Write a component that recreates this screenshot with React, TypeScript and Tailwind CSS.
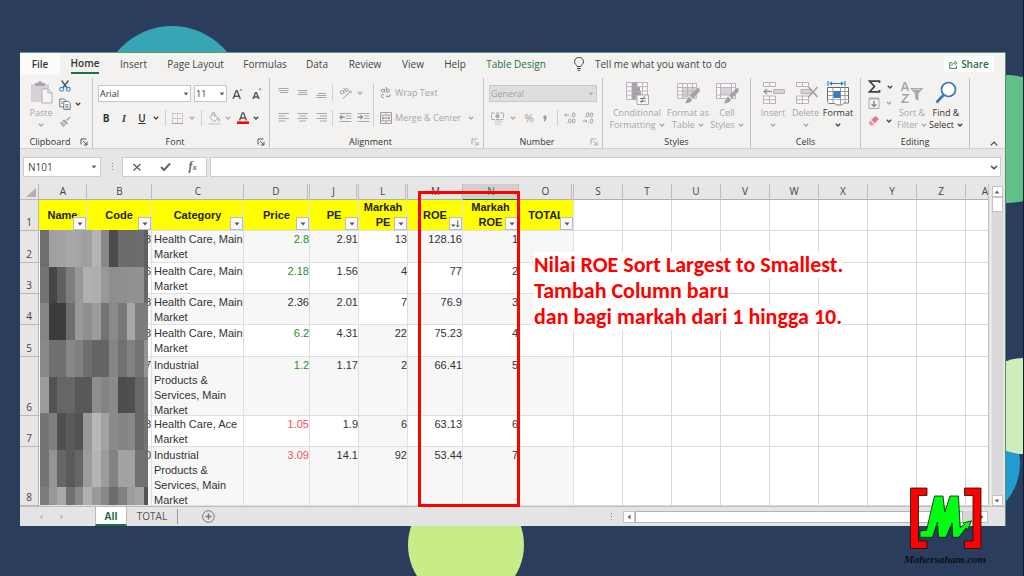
import type { ReactNode } from "react";

const UI_FONT = "font-['Open_Sans','Noto_Sans',sans-serif]";

/* ---------- small shared pieces ---------- */

function Chevron({ dark = false }: { dark?: boolean }) {
  return (
    <svg viewBox="0 0 6 4" className={dark ? "h-1 w-1.5 shrink-0 text-[#444]" : "h-1 w-1.5 shrink-0 text-[#aaa]"} fill="none" stroke="currentColor" strokeWidth="1.3">
      <path d="M0.8 0.8 3 3 5.2 0.8" />
    </svg>
  );
}

function Caret({ className }: { className: string }) {
  return (
    <svg viewBox="0 0 6 4" className={className} fill="currentColor">
      <path d="M0.5 0.5h5L3 3.5z" />
    </svg>
  );
}

function Launcher({ dark }: { dark: boolean }) {
  return (
    <svg viewBox="0 0 8 8" className={dark ? "size-2 text-[#555]" : "size-2 text-[#aaa]"} fill="none" stroke="currentColor" strokeWidth="1">
      <path d="M1 6.5V1h5.5M3 3l4 4M7 3.8V7H3.8" />
    </svg>
  );
}

function Divider({ tall = false }: { tall?: boolean }) {
  return <span className={tall ? "h-11 w-px bg-[#d0d0d0]" : "h-4 w-px bg-[#d0d0d0]"} />;
}

type GroupProps = { label: string; width: string; launcher?: "dark" | "light"; children: ReactNode };

function Group({ label, width, launcher, children }: GroupProps) {
  return (
    <section aria-label={label} className={`${width} flex shrink-0 flex-col`}>
      <div className="flex h-[70px] flex-col border-r border-[#c4c4c4]">
        <div className="flex h-[58px] items-start">{children}</div>
        <div className="flex h-3 items-center text-center text-[9px] font-medium leading-3 text-[#333]">
          <span className="flex-1">{label}</span>
          {launcher && (
            <button aria-label={`${label} settings`} className="flex w-3 shrink-0">
              <Launcher dark={launcher === "dark"} />
            </button>
          )}
        </div>
      </div>
    </section>
  );
}

/* ---------- ribbon drawings ---------- */

const PasteIcon = () => (
  <svg viewBox="0 0 24 24" className="size-6">
    <path d="M2 4h18v18H2z" fill="#d5d1d6" />
    <path d="M6 6V3h3a2 2 0 0 1 4 0h3v3z" fill="#aaa6aa" />
    <path d="M13 9h6l4 4v10H13z" fill="#f6f3f7" stroke="#b5b0b6" />
    <path d="M19 9v4h4" fill="none" stroke="#b5b0b6" />
  </svg>
);

const CutIcon = () => (
  <svg viewBox="0 0 12 12" className="size-3" fill="none">
    <path d="M2.6 0.5 8.2 8M9.4 0.5 3.8 8" stroke="#555" strokeWidth="1.4" />
    <circle cx="2.7" cy="9.3" r="1.9" stroke="#3f86c4" strokeWidth="1.1" />
    <circle cx="9.3" cy="9.3" r="1.9" stroke="#3f86c4" strokeWidth="1.1" />
  </svg>
);

const CopyIcon = () => (
  <svg viewBox="0 0 12 12" className="size-3" fill="#fff" stroke="#666" strokeWidth="0.9">
    <path d="M0.8 1h4.4l1.8 1.8v6H0.8z" />
    <path d="M4.8 3.4h4.4l2 2v6H4.8z" />
    <path d="M6.3 6.6h3M6.3 8.2h3.4M6.3 9.8h3.4M2.2 3.6h1.6M2.2 5.4h1.6" stroke="#3f86c4" />
  </svg>
);

const PainterIcon = () => (
  <svg viewBox="0 0 12 12" className="size-3">
    <path d="m7 4 3.6-3.5 1 1L8 5z" fill="#aaa" />
    <path d="m5 3.2 4 4-1.4 1.2-4-4z" fill="#999" />
    <path d="M3.2 5 7 8.8 4.2 11.4 0.6 7z" fill="#bfbbc0" />
  </svg>
);

const BordersIcon = () => (
  <svg viewBox="0 0 11 11" className="size-[11px]" fill="none" stroke="#b9aebb">
    <path d="M0.5 0.5h10v10h-10zM5.5 0.5v10M0.5 5.5h10" strokeDasharray="1.5 0.8" />
    <path d="M0.5 10.5h10" stroke="#a9a0ab" />
  </svg>
);

const BucketIcon = () => (
  <svg viewBox="0 0 13 13" className="size-[13px]">
    <path d="m5.500 1.500 4.700 4.700-4.200 3.600L1.800 5.600z" fill="#f6f3f7" stroke="#aaa" />
    <path d="M4 4V1.500a1.400 1.400 0 0 1 2.800 0V5" fill="none" stroke="#aaa" strokeWidth="0.9" />
    <path d="M10.400 5.400c1.600 1.400 1.600 3 1.200 3.800-.7.6-1.400 0-1.200-1z" fill="#aaa" />
    <path d="M0.500 11h12v2H.5z" fill="#ddd8de" />
  </svg>
);

const FontColorIcon = () => (
  <svg viewBox="0 0 12 12" className="size-3">
    <path d="M2.500 8.600 5.400 1h1.200l2.900 7.600M3.800 6h4.400" fill="none" stroke="#555" strokeWidth="1.3" />
    <path d="M0 9.400h12V12H0z" fill="#f00" />
  </svg>
);

function FontSizeIcon({ grow }: { grow: boolean }) {
  return (
    <svg viewBox="0 0 12 12" className="size-3" fill="none">
      <path d={grow ? "M1 11 4.200 2.800h.9L8.300 11M2.200 8.300h5" : "M2 11l2.600-6.400h.8L8 11M3 9h4"} stroke="#555" strokeWidth="1.4" />
      <path d={grow ? "M7.400 2.600 9 .8l1.600 1.800z" : "M7.400.8h3.400L9.100 2.600z"} fill="#3f86c4" />
    </svg>
  );
}

const ALIGN_PATHS: Record<string, string> = {
  top: "M0.5 1.5h10M0.5 3.5h10M2 5.5h8",
  middle: "M0.5 3.5h10M2 5.5h7.5M0.5 7.5h10",
  bottom: "M2 6.5h8M0.5 8.5h10M0.5 10.5h10",
  left: "M0.5 1.5h10.5M0.5 4h7M0.5 6.5h10.5M0.5 9h7",
  center: "M0.5 1.5h10.5M2.5 4h6.5M0.5 6.5h10.5M2.5 9h6.5",
  right: "M0.5 1.5h10.5M4 4h7M0.5 6.5h10.5M4 9h7",
};

function AlignButton({ kind }: { kind: string }) {
  return (
    <button aria-label={`Align ${kind}`} className="size-3">
      <svg viewBox="0 0 12 12" className="size-3" stroke="#a8a8a8" fill="none">
        <path d={ALIGN_PATHS[kind]} />
      </svg>
    </button>
  );
}

function IndentIcon({ out }: { out: boolean }) {
  return (
    <svg viewBox="0 0 13 12" className="h-3 w-[13px]" fill="none" stroke="#a8a8a8">
      <path d="M0.5 1.5h12M7 4h5.5M7 6.5h5.5M0.5 9.5h12" />
      <path d={out ? "M6 5.2H1M3 3.2 1 5.2l2 2" : "M0.5 5.2h5M3.5 3.2l2 2-2 2"} stroke="#888" strokeWidth="1.2" />
    </svg>
  );
}

const OrientationIcon = () => (
  <svg viewBox="0 0 13 12" className="h-3 w-[13px]" fill="none" stroke="#a0a0a0">
    <circle cx="3" cy="5.2" r="1.7" />
    <path d="m4.300 3.800 1.400 2.400M4.600 1l3.200 4" />
    <circle cx="7.6" cy="3" r="1.5" />
    <path d="m4 11.500 8-7.500M9.600 4H12v2.400" />
  </svg>
);

const WrapIcon = () => (
  <svg viewBox="0 0 11 12" className="h-3 w-[11px]" fill="none" stroke="#999">
    <circle cx="2.6" cy="3.6" r="1.5" />
    <path d="M4.500 1.800v3.600M6.400 0v5.400" />
    <circle cx="8" cy="3.7" r="1.5" />
    <path d="M4 7.700a1.700 1.700 0 1 0 0 2.800M10 7v2.400H6.400M7.600 8 6.200 9.400l1.400 1.400" />
  </svg>
);

const MergeIcon = () => (
  <svg viewBox="0 0 12 12" className="size-3" fill="none" stroke="#a59ea6">
    <path d="M0.500 0.500h11v11H.5zM0.500 3.200h11M0.500 8.800h11M6 .5v2.700M6 8.800v2.700" />
    <path d="M2 6h8M3.500 4.700 2 6l1.500 1.300M8.500 4.700 10 6 8.500 7.300" stroke="#888" />
  </svg>
);

const CurrencyIcon = () => (
  <svg viewBox="0 0 13 13" className="size-[13px]" fill="none" stroke="#aaa">
    <path d="M0.500 1h12v6.500H.5z" strokeDasharray="3.5 1" />
    <circle cx="6.5" cy="4.2" r="1.6" fill="#aaa" />
    <path d="M4 9h7M4 10.800h7M4 12.500h5" stroke="#ccc" />
  </svg>
);

function DecimalIcon({ more }: { more: boolean }) {
  return (
    <svg viewBox="0 0 12 12" className="size-3" fill="none" stroke="#999" strokeWidth="0.9">
      {more ? (
        <>
          <path d="M5 3H.8M2.300 1.500.8 3l1.500 1.500" />
          <rect x="8.4" y="0.8" width="2.4" height="4" rx="1.2" />
          <rect x="4.6" y="7" width="2.4" height="4" rx="1.2" />
          <rect x="8.4" y="7" width="2.4" height="4" rx="1.2" />
          <path d="M6.400 4.600h.8M2.800 10.900h.8" />
        </>
      ) : (
        <>
          <rect x="4.6" y="0.8" width="2.4" height="4" rx="1.2" />
          <rect x="8.4" y="0.8" width="2.4" height="4" rx="1.2" />
          <path d="M.5 9h4.400M3.400 7.500 4.900 9l-1.500 1.500M2.800 4.700h.8M6.400 10.900h.8" />
          <rect x="8.4" y="7" width="2.4" height="4" rx="1.2" />
        </>
      )}
    </svg>
  );
}

const ConditionalIcon = () => (
  <svg viewBox="0 0 24 24" className="size-6" fill="none" stroke="#bdb4be">
    <path d="M1.500 1.500h21v17h-21zM1.500 5.700h21M1.500 10h21M1.500 14.200h21M7 1.500v17M12 1.500v17M17.500 1.500v17" fill="#faf7fb" />
    <path d="M7 1.500h5v4.200H7zM7 6h8v4H7zM7 10.300h9v4H7zM7 14.400h4v4H7z" fill="#a5a1a6" stroke="none" />
    <path d="M12 14h11.500v9.500H12z" fill="#f8f6f8" stroke="#aaa" />
    <path d="M15 17.500h5.500M15 20.200h5.500M19.500 15.500l-3.500 6.500" stroke="#777" />
  </svg>
);

function BrushTableIcon({ cell }: { cell: boolean }) {
  return (
    <svg viewBox="0 0 24 24" className="size-6" fill="none">
      <path d="M1.500 2.500h19v15h-19z" fill="#faf7fb" stroke="#bdb4be" />
      {cell ? <path d="M5.500 6.500h11v7.500h-11z" fill="#d6d1d7" /> : <path d="M6.500 6.500h14v11h-14z" fill="#d6d1d7" />}
      <path d={cell ? "M5.500 2.500v15M16.500 2.500v15M1.500 6.500h19M1.500 14h19" : "M6.500 2.500v15M11.500 2.500v15M16.500 2.500v15M1.500 6.500h19M1.500 10.200h19M1.500 13.800h19"} stroke="#bdb4be" />
      <path d="M23.500 6.500v4l-6.500 7-3-3 7-7z" fill="#a3a3a3" />
      <path d="m13.300 15.300 3 3c-.5 3-3.500 4.700-8.300 4.500 2-1.300 1.500-6 5.300-7.500z" fill="#a3a3a3" stroke="#f3f2f1" />
    </svg>
  );
}

function CellsIcon({ remove }: { remove: boolean }) {
  return (
    <svg viewBox="0 0 24 24" className="size-6" fill="none" stroke="#b9b1ba">
      <path d="M2.500 1.500h12v4h-12zM8.500 1.500v4M2.500 15h12v7.500h-12zM8.500 15v7.500M2.500 18.700h12" fill="#faf7fb" />
      {remove ? (
        <>
          <path d="M7 8.500h10v4H7z" fill="#d5d1d6" />
          <path d="m14.500 6 9 10M23.500 6l-9 10" stroke="#a5a5a5" strokeWidth="1.8" />
        </>
      ) : (
        <>
          <path d="M12.500 8.500h11v4h-11z" fill="#d5d1d6" />
          <path d="M11 10.500H3M6 8l-3 2.500L6 13" stroke="#999" strokeWidth="1.4" />
        </>
      )}
    </svg>
  );
}

const FormatIcon = () => (
  <svg viewBox="0 0 24 25" className="h-[25px] w-6" fill="none">
    <path d="M2 0v5M19 0v5M4 2.500h13M6 .8l-2 1.700 2 1.700M15 .8l2 1.700-2 1.700" stroke="#2f7abf" strokeWidth="1.1" />
    <path d="M1.500 6.500h21v12h-21z" fill="#fff" stroke="#666" />
    <path d="M7 6.500v12M14.500 6.500v12M19 6.500v12M1.500 10.500h21M1.500 14.500h21" stroke="#999" />
    <path d="M7.500 10h7v7h-7z" fill="#3a7dbf" />
    <path d="M1.500 18.500c0 3 .5 4 2.500 4h4c2 0 2 1.500 4 1.500h3c2 0 1.500-2 4-2h3.500v-3.500" fill="#fff" stroke="#777" />
    <path d="M7 18.500v4M14.500 18.500v5M19 18.500V22" stroke="#999" />
  </svg>
);

const SigmaIcon = () => (
  <svg viewBox="0 0 13 13" className="size-[13px]" fill="none" stroke="#444" strokeWidth="1.7">
    <path d="M11.500 3V1.200H1.500l5 5.300-5 5.300h10V10" />
  </svg>
);

const FillIcon = () => (
  <svg viewBox="0 0 12 12" className="size-3" fill="none">
    <path d="M1 1.500h10v10H1z" fill="#f6f3f7" stroke="#aaa" />
    <path d="M1 0.500h10v2H1z" fill="#aaa" />
    <path d="M6 4v5.500M3.600 7.200 6 9.600l2.400-2.400" stroke="#888" strokeWidth="1.4" />
  </svg>
);

const EraserIcon = () => (
  <svg viewBox="0 0 12 12" className="size-3">
    <path d="m7.500 1 3.500 3-4.500 4.500L3 5z" fill="#e8748a" />
    <path d="M2.600 5.400 6 8.900 4.500 10.500h-2L.8 8.600V7.300z" fill="#ee93a4" />
    <path d="m3.600 5.500 2.600 2.600" stroke="#fff" strokeWidth="0.7" />
  </svg>
);

const SortFilterIcon = () => (
  <svg viewBox="0 0 24 24" className="size-6" fill="none" stroke="#a5a5a5" strokeWidth="1.5">
    <path d="M1.500 10 4.500 2h1l3 8M2.500 7.300h5M2 13.800h6L2 21.300h6.500" />
    <path d="M10 7h13.500l-5 5.500V20L15 17.500v-5z" fill="#aaa" stroke="none" />
    <path d="M13 8.500h7" stroke="#d6d6d6" strokeWidth="1" />
  </svg>
);

const FindIcon = () => (
  <svg viewBox="0 0 24 24" className="size-6" fill="none" stroke="#3a76b8">
    <circle cx="14.5" cy="8.5" r="7" fill="#fff" strokeWidth="1.7" />
    <path d="m9.500 14-7 7.500" strokeWidth="2.6" />
  </svg>
);

/* ---------- ribbon ---------- */

type BigButtonProps = { icon: ReactNode; lines: string[]; width: string; dark?: boolean };

function BigButton({ icon, lines, width, dark = false }: BigButtonProps) {
  const last = lines.length - 1;
  return (
    <button className={`${width} ${dark ? "text-[#333]" : "text-[#a6a6a6]"} flex shrink-0 flex-col items-center pt-px text-[9px] leading-3`}>
      <span className="flex h-[26px] items-start justify-center">{icon}</span>
      {lines.map((line, i) => (
        <span key={line + i} className="flex h-3 items-center gap-[3px] whitespace-nowrap">
          {line}
          {i === last && <Chevron dark={dark} />}
        </span>
      ))}
    </button>
  );
}

const TABS = [
  { name: "Insert", width: "w-[25px]" },
  { name: "Page Layout", width: "w-[55px]" },
  { name: "Formulas", width: "w-10" },
  { name: "Data", width: "w-5" },
  { name: "Review", width: "w-8" },
  { name: "View", width: "w-5" },
  { name: "Help", width: "w-5" },
];

function TabBar() {
  return (
    <nav className="flex h-[25px] items-stretch whitespace-nowrap border-t border-[#5d9b78] text-[10px] text-[#444]">
      <button className="flex h-[22px] w-10 items-center justify-center bg-[#fbfbfa] font-semibold text-[#333]">File</button>
      <button className="ml-[11px] mr-[22px] flex h-[21px] w-7 items-center justify-center border-b-2 border-[#1c7145] pt-0.5 font-semibold text-[#333]">Home</button>
      <div className="flex h-[22px] items-center gap-[22px]">
        {TABS.map((tab) => (
          <button key={tab.name} className={`${tab.width} flex justify-center`}>{tab.name}</button>
        ))}
        <button className="flex w-[58px] justify-center text-[#1e7145]">Table Design</button>
      </div>
      <label className="ml-7 flex h-[22px] items-center gap-2.5">
        <svg viewBox="0 0 12 14" className="h-[14px] w-3" fill="none" stroke="#444">
          <path d="M4 9.500C4 8 1.500 7 1.500 4.800a4.500 4.500 0 0 1 9 0C10.500 7 8 8 8 9.500zM4 11.500h4M4.700 13.300h2.600" />
        </svg>
        <input aria-label="Search commands" placeholder="Tell me what you want to do" className="w-36 bg-transparent outline-none placeholder:text-[#444]" />
      </label>
      <button className="ml-auto mr-[11px] mt-[3px] flex h-4 w-[50px] items-center justify-center gap-[3px] bg-white font-semibold text-[#1e7145]">
        <svg viewBox="0 0 10 10" className="size-[9px]" fill="none" stroke="currentColor">
          <path d="M3.500 3H.8v6.300h7.500V6.500M3 6.500C3.200 4.300 4.500 3.400 7 3.300M6.200 1l2.600 2.300-2.600 2.200" />
        </svg>
        <span>Share</span>
      </button>
    </nav>
  );
}

function Ribbon() {
  return (
    <div className="flex h-[72px] items-start border-b border-[#cfcfcf] pt-px">
      <Group label="Clipboard" width="w-[73px]" launcher="dark">
        <div className="flex w-full pl-[5px] pt-[2px]">
          <button className="flex w-8 flex-col items-center text-[9px] leading-3 text-[#a6a6a6]">
            <PasteIcon />
            <span className="mt-[3px] h-3">Paste</span>
            <span className="flex h-3 items-center"><Chevron /></span>
          </button>
          <div className="flex flex-col gap-1.5 pl-0.5">
            <button aria-label="Cut"><CutIcon /></button>
            <button aria-label="Copy" className="flex items-center gap-1"><CopyIcon /><Chevron dark /></button>
            <button aria-label="Format Painter"><PainterIcon /></button>
          </div>
        </div>
      </Group>

      <Group label="Font" width="w-[177px]" launcher="dark">
        <div className="flex flex-col gap-2 pl-[5px] pt-[7px]">
          <div className="flex h-[17px] items-center gap-[3px]">
            <label className="relative">
              <select aria-label="Font name" className="block h-[17px] w-[93px] appearance-none border border-[#c6c6c6] bg-white px-px text-[9px] leading-3 text-[#333] outline-none">
                <option>Arial</option>
              </select>
              <Caret className="absolute right-[2px] top-[7px] h-1 w-1.5 text-[#666]" />
            </label>
            <label className="relative">
              <select aria-label="Font size" className="block h-[17px] w-[33px] appearance-none border border-[#c6c6c6] bg-white px-px text-[9px] leading-3 text-[#333] outline-none">
                <option>11</option>
              </select>
              <Caret className="absolute right-[2px] top-[7px] h-1 w-1.5 text-[#666]" />
            </label>
            <div className="flex gap-[7px] pl-[2px]">
              <button aria-label="Increase font size"><FontSizeIcon grow /></button>
              <button aria-label="Decrease font size"><FontSizeIcon grow={false} /></button>
            </div>
          </div>
          <div className="flex h-4 items-center text-[10px] text-[#333]">
            <button className="w-4 font-bold">B</button>
            <button className="ml-0.5 w-4 font-['Liberation_Serif',serif] font-bold italic">I</button>
            <button className="ml-[3px] mr-1 w-3.5 font-semibold underline">U</button>
            <Chevron dark />
            <span className="mx-[6px] flex"><Divider /></span>
            <button aria-label="Borders" className="flex items-center gap-1.5"><BordersIcon /><Chevron /></button>
            <span className="mx-[6px] flex"><Divider /></span>
            <button aria-label="Fill colour" className="flex items-center gap-1"><BucketIcon /><Chevron /></button>
            <button aria-label="Font colour" className="ml-1.5 flex items-center gap-1"><FontColorIcon /><Chevron dark /></button>
          </div>
        </div>
      </Group>

      <Group label="Alignment" width="w-[214px]" launcher="light">
        <div className="flex pl-2 pt-[5px] text-[9px] text-[#a6a6a6]">
          <div className="flex flex-col gap-[9px] pt-0.5">
            <div className="flex h-4 items-center">
              <div className="mr-1 flex gap-[7px]"><AlignButton kind="top" /><AlignButton kind="middle" /><AlignButton kind="bottom" /></div>
              <Divider />
              <button aria-label="Orientation" className="ml-1.5 flex items-center gap-[5px]"><OrientationIcon /><Chevron /></button>
            </div>
            <div className="flex h-4 items-center">
              <div className="mr-1 flex gap-[7px]"><AlignButton kind="left" /><AlignButton kind="center" /><AlignButton kind="right" /></div>
              <Divider />
              <button aria-label="Decrease indent" className="ml-1.5"><IndentIcon out /></button>
              <button aria-label="Increase indent" className="ml-[5px]"><IndentIcon out={false} /></button>
            </div>
          </div>
          <span className="ml-[3px] mr-1.5 flex"><Divider tall /></span>
          <div className="flex flex-col gap-[9px] whitespace-nowrap pt-0.5">
            <button className="flex h-4 items-center gap-1"><WrapIcon />Wrap Text</button>
            <button className="flex h-4 items-center gap-[3px]"><MergeIcon />Merge &amp; Center<span className="ml-1 flex"><Chevron /></span></button>
          </div>
        </div>
      </Group>

      <Group label="Number" width="w-[119px]" launcher="light">
        <div className="flex flex-col gap-2 pl-[5px] pt-[7px] text-[#999]">
          <label className="relative">
            <select aria-label="Number format" className="block h-[17px] w-[108px] appearance-none border border-[#c9c9c9] bg-[#dedede] px-px text-[9px] leading-3 text-[#a3a3a3] outline-none">
              <option>General</option>
            </select>
            <Caret className="absolute right-[3px] top-[7px] h-1 w-1.5 text-[#b0b0b0]" />
          </label>
          <div className="flex h-4 items-center">
            <button aria-label="Currency" className="flex items-center gap-1.5 pl-0.5"><CurrencyIcon /><Chevron /></button>
            <button className="ml-[5px] w-4 text-[11px] leading-4">%</button>
            <button aria-label="Comma style" className="ml-1 mr-2 flex w-2 justify-center">
              <svg viewBox="0 0 4 7" className="h-[7px] w-1" fill="#999"><path d="M0.500 0.500h3v3.200L1.800 6.500H.6l1-2.700H.5z" /></svg>
            </button>
            <Divider />
            <button aria-label="Increase decimal" className="ml-1.5"><DecimalIcon more /></button>
            <button aria-label="Decrease decimal" className="ml-1.5"><DecimalIcon more={false} /></button>
          </div>
        </div>
      </Group>

      <Group label="Styles" width="w-[148px]">
        <div className="flex pl-1 pt-0.5">
          <BigButton icon={<ConditionalIcon />} lines={["Conditional", "Formatting"]} width="w-[60px]" />
          <BigButton icon={<BrushTableIcon cell={false} />} lines={["Format as", "Table"]} width="w-[42px]" />
          <BigButton icon={<BrushTableIcon cell />} lines={["Cell", "Styles"]} width="w-[36px]" />
        </div>
      </Group>

      <Group label="Cells" width="w-[110px]">
        <div className="flex pl-[5px] pt-0.5">
          <BigButton icon={<CellsIcon remove={false} />} lines={["Insert", ""]} width="w-[34px]" />
          <BigButton icon={<CellsIcon remove />} lines={["Delete", ""]} width="w-[31px]" />
          <BigButton icon={<FormatIcon />} lines={["Format", ""]} width="w-[34px]" dark />
        </div>
      </Group>

      <Group label="Editing" width="w-[109px]">
        <div className="flex pl-[7px] pt-0.5">
          <div className="flex flex-col gap-1">
            <button aria-label="AutoSum" className="flex items-center gap-1.5"><SigmaIcon /><Chevron dark /></button>
            <button aria-label="Fill" className="flex items-center gap-1.5"><FillIcon /><Chevron /></button>
            <button aria-label="Clear" className="flex items-center gap-1.5 pt-0.5"><EraserIcon /><Chevron dark /></button>
          </div>
          <div className="ml-0.5 flex">
            <BigButton icon={<SortFilterIcon />} lines={["Sort &", "Filter"]} width="w-[34px]" />
            <BigButton icon={<FindIcon />} lines={["Find &", "Select"]} width="w-[34px]" dark />
          </div>
        </div>
      </Group>

      <button aria-label="Collapse ribbon" className="ml-auto mr-[7px] self-end pb-0.5">
        <svg viewBox="0 0 8 5" className="h-[5px] w-2" fill="none" stroke="#444" strokeWidth="1.2">
          <path d="M0.800 4.300 4 1l3.200 3.300" />
        </svg>
      </button>
    </div>
  );
}

function FormulaBar() {
  return (
    <div className="flex h-[35px] items-center bg-[#e6e6e6] pl-[3px] pr-1 text-[10px] text-[#444]">
      <label className="relative">
        <input aria-label="Name box" defaultValue="N101" className="block h-5 w-[78px] border border-[#cdcdcd] bg-white px-1 outline-none" />
        <Caret className="absolute right-[4px] top-2 h-1 w-1.5 text-[#666]" />
      </label>
      <span className="ml-[9px] flex w-1 flex-col items-center gap-0.5">
        <i className="size-px bg-[#888]" /><i className="size-px bg-[#888]" /><i className="size-px bg-[#888]" />
      </span>
      <div className="ml-2 flex h-5 w-[85px] items-center justify-around border border-[#cdcdcd] bg-white">
        <button aria-label="Cancel">
          <svg viewBox="0 0 10 10" className="size-2.5" stroke="#666" strokeWidth="1.5"><path d="m1.500 2 7 6.500M8.500 2l-7 6.500" /></svg>
        </button>
        <button aria-label="Enter">
          <svg viewBox="0 0 11 10" className="h-2.5 w-[11px]" fill="none" stroke="#666" strokeWidth="2"><path d="m1 5 3 3 6-6.500" /></svg>
        </button>
        <button aria-label="Insert function" className="font-['Liberation_Serif',serif] text-[12px] font-bold italic leading-3 text-[#666]">
          f<span className="text-[9px]">x</span>
        </button>
      </div>
      <label className="relative ml-[3px] flex-1">
        <input aria-label="Formula" className="block h-5 w-full border border-[#cdcdcd] bg-white px-1 outline-none" />
        <svg viewBox="0 0 8 5" className="absolute right-[3px] top-2 h-[5px] w-2" fill="none" stroke="#444" strokeWidth="1.5"><path d="M1 1l3 2.800L7 1" /></svg>
      </label>
    </div>
  );
}

/* ---------- sheet ---------- */

const COLUMNS = [
  { id: "A", col: "w-12", title: "Name" },
  { id: "B", col: "w-[65px]", title: "Code" },
  { id: "C", col: "w-[92px]", title: "Category" },
  { id: "D", col: "w-[66px]", title: "Price", gap: true },
  { id: "J", col: "w-[49px]", title: "PE", gap: true },
  { id: "L", col: "w-[49px]", title: "Markah PE", gap: true },
  { id: "M", col: "w-[55px]", title: "ROE" },
  { id: "N", col: "w-[56px]", title: "Markah ROE" },
  { id: "O", col: "w-[55px]", title: "TOTAL", gap: true },
];

const EMPTY_COLUMNS = ["S", "T", "U", "V", "W", "X", "Y", "Z"];

const SHORT = "h-[30px]";
const MEDIUM = "h-[31px]";
const TALL = "h-[58px]";
const GREEN = "text-[#1f8f2a]";
const RED = "text-[#f05252]";

const ROWS = [
  { n: 2, h: MEDIUM, code: "3", category: "Health Care, Main Market", price: "2.8", tone: GREEN, pe: "2.91", mpe: "13", roe: "128.16", mroe: "1", shade: true, shadeL: false },
  { n: 3, h: SHORT, code: "6", category: "Health Care, Main Market", price: "2.18", tone: GREEN, pe: "1.56", mpe: "4", roe: "77", mroe: "2", shade: false, shadeL: true },
  { n: 4, h: SHORT, code: "8", category: "Health Care, Main Market", price: "2.36", tone: "text-[#333]", pe: "2.01", mpe: "7", roe: "76.9", mroe: "3", shade: true, shadeL: false },
  { n: 5, h: MEDIUM, code: "8", category: "Health Care, Main Market", price: "6.2", tone: GREEN, pe: "4.31", mpe: "22", roe: "75.23", mroe: "4", shade: false, shadeL: true },
  { n: 6, h: TALL, code: "7", category: "Industrial Products & Services, Main Market", price: "1.2", tone: GREEN, pe: "1.17", mpe: "2", roe: "66.41", mroe: "5", shade: true, shadeL: true },
  { n: 7, h: SHORT, code: "8", category: "Health Care, Ace Market", price: "1.05", tone: RED, pe: "1.9", mpe: "6", roe: "63.13", mroe: "6", shade: false, shadeL: true },
  { n: 8, h: TALL, code: "0", category: "Industrial Products & Services, Main Market", price: "3.09", tone: RED, pe: "14.1", mpe: "92", roe: "53.44", mroe: "7", shade: true, shadeL: true },
];

function RowHeader({ n, h }: { n: number; h: string }) {
  return (
    <th scope="row" className="border-b border-r border-[#b8b8b8] bg-[#e6e6e6] p-0 font-normal text-[#444]">
      <div className={`${h} ${UI_FONT} flex items-end justify-center text-[10px] leading-[15px]`}>{n}</div>
    </th>
  );
}

function EmptyCells() {
  return (
    <>
      {EMPTY_COLUMNS.map((id) => <td key={id} className="border-b border-r border-[#d9d9d9] bg-white p-0" />)}
      <td className="border-b border-[#d9d9d9] bg-white p-0" />
    </>
  );
}

type DataCellProps = { h: string; shade: boolean; tone?: string; text?: string; align?: string };

function DataCell({ h, shade, tone = "text-[#333]", text, align = "text-right" }: DataCellProps) {
  return (
    <td className={`${shade ? "bg-[#f7f7f7]" : "bg-white"} border-b border-r border-[#dcdfe4] p-0`}>
      <div className={`${h} ${tone} ${align} overflow-hidden pl-0.5 pt-px leading-[15px]`}>{text}</div>
    </td>
  );
}

function Sheet() {
  return (
    <table className="w-full table-fixed border-separate border-spacing-0 font-['Liberation_Sans',Arial,sans-serif] text-[11px]">
      <colgroup>
        <col className="w-[19px]" />
        {COLUMNS.map((c) => <col key={c.id} className={c.col} />)}
        {EMPTY_COLUMNS.map((id) => <col key={id} className="w-[49px]" />)}
        <col />
      </colgroup>
      <thead className={`${UI_FONT} text-[10px] text-[#444]`}>
        <tr>
          <td className="border-b border-r border-[#b8b8b8] bg-[#e6e6e6] p-0">
            <svg viewBox="0 0 18 15" className="h-[15px] w-full"><path d="M16 4v9H6z" fill="#b0b0b0" /></svg>
          </td>
          {COLUMNS.map((c) => (
            <th
              key={c.id}
              scope="col"
              className={`${c.id === "N" ? "border-b-[#1e7145] bg-[#d0d0d0] text-[#1e7145]" : "border-b-[#b0b0b0] bg-[#e6e6e6]"} ${c.gap ? "border-r-[3px] border-double" : "border-r"} h-4 border-b border-r-[#bcbcbc] p-0 pl-px font-normal leading-[15px]`}
            >
              {c.id}
            </th>
          ))}
          {EMPTY_COLUMNS.map((id) => (
            <th key={id} scope="col" className="border-b border-r border-b-[#b0b0b0] border-r-[#bcbcbc] bg-[#e6e6e6] p-0 font-normal leading-[15px]">{id}</th>
          ))}
          <th scope="col" className="overflow-hidden border-b border-b-[#b0b0b0] bg-[#e6e6e6] p-0 text-right font-normal leading-[15px]">A</th>
        </tr>
      </thead>
      <tbody>
        <tr>
          <RowHeader n={1} h={SHORT} />
          {COLUMNS.map((c) => (
            <td key={c.id} className="relative border-b border-r border-[#dcdfe4] bg-[#ff0] p-0 text-center font-bold leading-[15px] text-[#222]">
              <div className="flex h-[30px] items-center justify-center overflow-hidden">{c.title}</div>
              <button aria-label={`Filter ${c.title}`} className="absolute bottom-0 right-0 flex h-[13px] w-[13px] items-center justify-center border border-[#b9bcc4] bg-[#fafafc]">
                {c.id === "M" ? (
                  <svg viewBox="0 0 9 8" className="h-2 w-[9px]"><path d="M0 4.500h4.500L2.200 7z" fill="#555" /><path d="M6.800.5V7M5.300 5.300 6.800 7l1.500-1.700" fill="none" stroke="#555" /></svg>
                ) : (
                  <Caret className="h-1 w-1.5 text-[#555]" />
                )}
              </button>
            </td>
          ))}
          <EmptyCells />
        </tr>
        {ROWS.map((r) => (
          <tr key={r.n}>
            <RowHeader n={r.n} h={r.h} />
            <DataCell h={r.h} shade={r.shade} />
            <DataCell h={r.h} shade={r.shade} text={r.code} />
            <DataCell h={r.h} shade={r.shade} text={r.category} align="text-left" />
            <DataCell h={r.h} shade={r.shade} text={r.price} tone={r.tone} />
            <DataCell h={r.h} shade={r.shade} text={r.pe} />
            <DataCell h={r.h} shade={r.shadeL} text={r.mpe} />
            <DataCell h={r.h} shade={r.shade} text={r.roe} />
            <DataCell h={r.h} shade={r.shade} text={r.mroe} />
            <DataCell h={r.h} shade={r.shade} />
            <EmptyCells />
          </tr>
        ))}
      </tbody>
    </table>
  );
}

/* Grey levels of the mosaic that hides the Name and Code columns. */
const MOSAIC = [
  [110, 160, 163, 168, 164, 159, 180, 136, 76, 108, 106, 108, 96],
  [116, 69, 96, 126, 152, 176, 174, 152, 142, 142, 146, 146, 104],
  [134, 60, 60, 110, 154, 142, 156, 116, 138, 120, 168, 124, 124],
  [136, 112, 112, 136, 128, 110, 100, 100, 133, 112, 130, 116, 148],
  [156, 82, 102, 102, 88, 88, 142, 132, 138, 76, 80, 104, 122],
  [116, 128, 80, 90, 82, 152, 184, 162, 138, 132, 136, 104, 116],
  [116, 148, 102, 90, 102, 156, 180, 156, 130, 162, 162, 114, 112],
  [124, 152, 168, 112, 138, 176, 154, 136, 108, 128, 156, 164, 85],
];

function Mosaic() {
  return (
    <div aria-hidden="true" className="absolute left-[20px] top-[46px] grid h-[275px] w-[108px] grid-cols-[repeat(12,minmax(0,1fr))_4px] grid-rows-[repeat(7,minmax(0,2fr))_minmax(0,1fr)]">
      {MOSAIC.flatMap((row, y) =>
        row.map((v, x) => <span key={`${x}-${y}`} style={{ backgroundColor: `rgb(${v} ${v} ${v})` }} />)
      )}
    </div>
  );
}

function Note() {
  return (
    <p className="absolute left-[514px] top-[68px] flex flex-col items-start whitespace-nowrap font-['Carlito','Lato',sans-serif] text-[22px] font-bold leading-[26px] text-[#f00]">
      <span className="bg-white">Nilai ROE Sort Largest to Smallest.</span>
      <span className="bg-white">Tambah Column baru</span>
      <span className="bg-white">dan bagi markah dari 1 hingga 10.</span>
    </p>
  );
}

function ScrollArrow({ label, d, className }: { label: string; d: string; className: string }) {
  return (
    <button aria-label={label} className={`${className} flex shrink-0 items-center justify-center border border-[#c4c4c4] bg-white`}>
      <svg viewBox="0 0 6 6" className="size-1.5" fill="#666"><path d={d} /></svg>
    </button>
  );
}

function SheetTabs() {
  return (
    <div className="flex h-5 items-stretch border-t border-[#bdbdbd] bg-[#e4e4e4] text-[10px] text-[#555]">
      <div className="flex w-[75px] items-center gap-[15px] pl-[18px]">
        <svg viewBox="0 0 6 6" className="size-1.5" fill="#bbb"><path d="M4.500.5v5L1.500 3z" /></svg>
        <svg viewBox="0 0 6 6" className="size-1.5" fill="#bbb"><path d="M1.500.5v5l3-2.500z" /></svg>
      </div>
      <button className="flex w-8 items-center justify-center border-x border-b-2 border-x-[#bbb] border-b-[#1e7145] bg-white pt-0.5 font-bold text-[#1e7145]">All</button>
      <button className="w-[50px]">TOTAL</button>
      <span className="my-0.5 w-px bg-[#999]" />
      <button aria-label="New sheet" className="ml-6 self-center">
        <svg viewBox="0 0 13 13" className="size-[13px]" fill="none" stroke="#777"><circle cx="6.5" cy="6.5" r="5.8" /><path d="M3.500 6.500h6M6.500 3.500v6" strokeWidth="1.4" /></svg>
      </button>
      <div className="ml-auto mr-[17px] flex w-[377px] items-center">
        <span className="mr-[11px] flex flex-col gap-0.5">
          <i className="size-px bg-[#888]" /><i className="size-px bg-[#888]" /><i className="size-px bg-[#888]" />
        </span>
        <ScrollArrow label="Scroll left" d="M4.500.5v5L1.500 3z" className="h-3 w-3" />
        <div className="flex h-3 flex-1 bg-[#d6d6d6]"><div className="w-[328px] border border-[#b4b4b4] bg-white" /></div>
        <ScrollArrow label="Scroll right" d="M1.500.5v5l3-2.500z" className="h-3 w-3" />
      </div>
    </div>
  );
}

function Logo() {
  return (
    <div className="absolute left-[900px] top-[480px] flex w-[90px] flex-col items-center">
      <svg viewBox="0 0 90 70" className="h-[70px] w-[90px]" stroke="#111" strokeWidth="0.8">
        <path d="M10.500 8H27v7.500h-8.500V61H27v7.500H10.500zM64.500 8h16.500v60.500H64.500V61h8.500V15.500h-8.500z" fill="#f00" />
        <path d="M20 51l6.500-.7L34.500 16h8.500l1.800 16L50 16h8.500l1.700 31.500 4.300-3-1.500-1.500 8.500-2.200-3.700 9-1.500-2-7.500 9.500h-6L52 43 46 57.300h-7.500L37.500 42 32.500 57.300H20z" fill="#0f1" />
      </svg>
      <p className="h-4 whitespace-nowrap font-['Liberation_Serif',serif] text-[11px] font-bold italic leading-[18px] text-[#0b0f18]">Mahersaham.com</p>
    </div>
  );
}

export default function App() {
  return (
    <div className={`${UI_FONT} relative min-h-screen overflow-hidden bg-[#2a3d5c] pb-[50px] pl-5 pr-[18px] pt-[52px]`}>
      <div className="absolute left-[101px] top-[26px] size-[142px] rounded-full bg-[#38a5b5]" />
      <div className="absolute left-[943px] top-[75px] size-32 rounded-full bg-[#62c08a]" />
      <div className="absolute left-[900px] top-[403px] size-[120px] rounded-full bg-[#229cd0]" />
      <div className="absolute left-[975px] top-[358px] size-24 rounded-full bg-[#cfedbb]" />
      <div className="absolute left-[408px] top-[487px] size-[116px] rounded-full bg-[#c7ec88]" />
      <div className="absolute inset-y-0 right-0 w-px bg-[#101c38]" />

      <main className="relative border-r border-[#5d8a72] bg-[#f3f2f1]">
        <TabBar />
        <Ribbon />
        <FormulaBar />
        <div className="relative flex bg-[#e6e6e6]">
          <div className="min-w-0 flex-1 border-r border-[#c0c0c0]"><Sheet /></div>
          <div className="flex w-4 flex-col items-center pt-0.5">
            <div className="flex w-[11px] flex-1 flex-col bg-[#d9d9d9]">
              <ScrollArrow label="Scroll up" d="M.5 4.500h5L3 1.500z" className="h-[11px] w-[11px]" />
              <div className="h-[15px] border border-[#c4c4c4] bg-white" />
              <div className="flex-1" />
              <ScrollArrow label="Scroll down" d="M.5 1.500h5L3 4.500z" className="h-[11px] w-[11px]" />
            </div>
          </div>
          <Mosaic />
          <Note />
          <div className="absolute -bottom-px left-[398px] top-[7px] w-[102px] border-[3px] border-[#f00]" />
        </div>
        <SheetTabs />
      </main>
      <Logo />
    </div>
  );
}
